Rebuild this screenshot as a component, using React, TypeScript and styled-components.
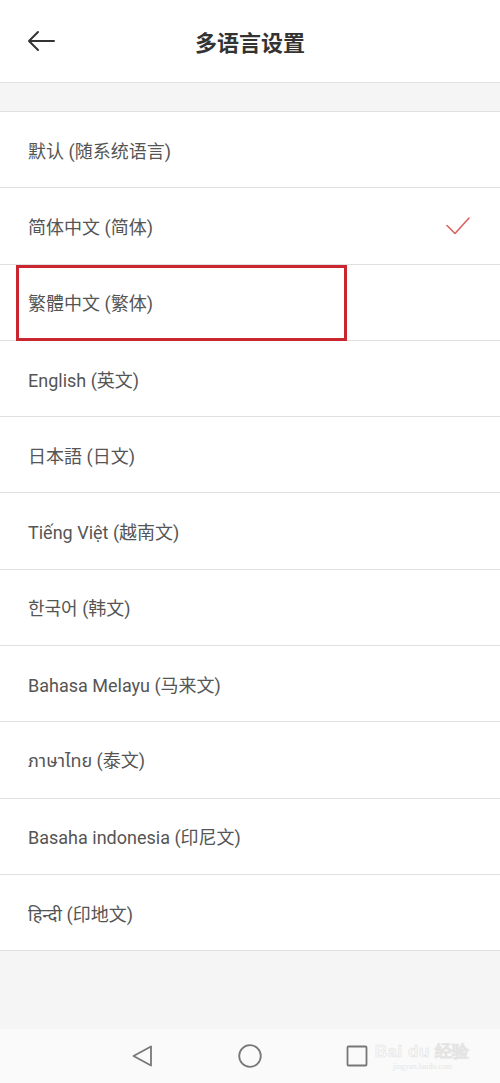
import React from "react";
import styled, { createGlobalStyle } from "styled-components";

const GlobalStyle = createGlobalStyle`
  html, body {
    margin: 0;
    padding: 0;
    background: #f5f5f5;
  }
  body {
    font-family: Roboto, "Noto Sans", "Noto Sans CJK SC", sans-serif;
  }
`;

const Screen = styled.div`
  width: 500px;
  height: 1083px;
  display: flex;
  flex-direction: column;
  background: #f5f5f5;
  position: relative;
  overflow: hidden;
`;

const Header = styled.div`
  height: 82px;
  flex-shrink: 0;
  display: grid;
  grid-template-columns: 80px 1fr 80px;
  align-items: center;
  background: #ffffff;
  border-bottom: 1px solid #e2e2e2;
`;

const BackButton = styled.button`
  border: none;
  background: none;
  padding: 0 0 0 26px;
  display: flex;
  align-items: center;
  height: 100%;
  cursor: pointer;
`;

const Title = styled.h1`
  margin: 0;
  text-align: center;
  font-family: "Noto Sans CJK SC", sans-serif;
  font-size: 22px;
  font-weight: 700;
  color: #333333;
`;

const Gap = styled.div`
  height: 28px;
  flex-shrink: 0;
  background: #f5f5f5;
`;

const List = styled.ul`
  list-style: none;
  margin: 0;
  padding: 0;
  background: #ffffff;
  border-top: 1px solid #e0e0e0;
`;

const Row = styled.li`
  box-sizing: border-box;
  height: 76.3px;
  display: flex;
  align-items: center;
  justify-content: space-between;
  padding: 0 30px 0 28px;
  border-bottom: 1px solid #e0e0e0;
  position: relative;
`;

const Label = styled.span`
  font-family: Roboto, "Noto Sans", "Noto Sans Thai", "Noto Sans Devanagari", "Noto Sans CJK SC", sans-serif;
  font-size: 18px;
  color: #555555;
`;

const Highlight = styled.div`
  position: absolute;
  left: 16px;
  top: 0;
  width: 331px;
  height: 76px;
  box-sizing: border-box;
  border: 3px solid #c9262f;
  pointer-events: none;
`;

const Filler = styled.div`
  flex: 1;
  background: #f5f5f5;
`;

const NavBar = styled.div`
  height: 54px;
  flex-shrink: 0;
  background: #fafafa;
  display: flex;
  align-items: center;
  justify-content: center;
  gap: 83px;
`;

const NavIcon = styled.svg`
  width: 24px;
  height: 24px;
  display: block;
`;

const Watermark = styled.div`
  position: absolute;
  right: 30px;
  bottom: 12px;
  display: flex;
  flex-direction: column;
  align-items: center;
  font-family: "Liberation Sans", sans-serif;
  pointer-events: none;
`;

const WatermarkBrand = styled.div`
  font-size: 17px;
  font-weight: 700;
  letter-spacing: 0.5px;
  -webkit-text-stroke: 0.6px #e4e4e4;
  color: #f8f8f8;
`;

const WatermarkUrl = styled.div`
  font-family: "Liberation Serif", serif;
  font-size: 8px;
  color: #e6e6e6;
  margin-top: -1px;
`;

const languages = [
  "默认 (随系统语言)",
  "简体中文 (简体)",
  "繁體中文 (繁体)",
  "English (英文)",
  "日本語 (日文)",
  "Tiếng Việt (越南文)",
  "한국어 (韩文)",
  "Bahasa Melayu (马来文)",
  "ภาษาไทย (泰文)",
  "Basaha indonesia (印尼文)",
  "हिन्दी (印地文)",
];

const selected = 1;
const boxed = 2;

export default function App() {
  return (
    <>
      <GlobalStyle />
      <Screen>
        <Header>
          <BackButton aria-label="back">
            <svg width="30" height="24" viewBox="0 0 30 24" fill="none">
              <path
                d="M28 12H3M12 3L3 12l9 9"
                stroke="#333"
                strokeWidth="2"
                strokeLinecap="round"
                strokeLinejoin="round"
              />
            </svg>
          </BackButton>
          <Title>多语言设置</Title>
          <div />
        </Header>
        <Gap />
        <List>
          {languages.map((lang, i) => (
            <Row key={lang}>
              <Label lang={i === 8 ? "th" : i === 10 ? "hi" : i === 6 ? "ko" : i === 4 ? "ja" : "zh-CN"}>
                {lang}
              </Label>
              {i === selected && (
                <svg width="24" height="20" viewBox="0 0 24 20" fill="none">
                  <path
                    d="M1 9.5l8 8L23 2"
                    stroke="#dc625e"
                    strokeWidth="1.6"
                    strokeLinecap="round"
                    strokeLinejoin="round"
                  />
                </svg>
              )}
              {i === boxed && <Highlight />}
            </Row>
          ))}
        </List>
        <Filler />
        <NavBar>
          <NavIcon viewBox="0 0 24 24" fill="none">
            <path
              d="M20 2.5L2.5 12L20 21.5Z"
              stroke="#777"
              strokeWidth="1.8"
              strokeLinejoin="round"
            />
          </NavIcon>
          <NavIcon viewBox="0 0 24 24" fill="none">
            <circle cx="12" cy="12" r="10.8" stroke="#777" strokeWidth="1.8" />
          </NavIcon>
          <NavIcon viewBox="0 0 24 24" fill="none">
            <rect x="2.5" y="2.5" width="19" height="19" rx="1" stroke="#777" strokeWidth="1.8" />
          </NavIcon>
        </NavBar>
        <Watermark>
          <WatermarkBrand>Bai du 经验</WatermarkBrand>
          <WatermarkUrl>jingyan.baidu.com</WatermarkUrl>
        </Watermark>
      </Screen>
    </>
  );
}
